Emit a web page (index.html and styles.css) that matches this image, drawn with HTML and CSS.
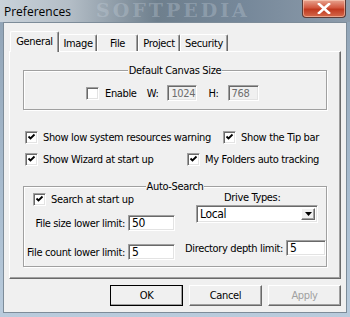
FILE: index.html
```html
<!DOCTYPE html>
<html lang="en">
<head>
    <meta charset="UTF-8">
    <title>Preferences</title>
    <link rel="stylesheet" href="styles.css">
</head>
<body>
    <div class="window">
        <div class="titlebar">
            <span class="title">Preferences</span>
            <span class="watermark">SOFTPEDIA</span>
            <span class="close">
                <svg width="14" height="11" viewBox="0 0 14 11">
                    <path d="M2 1 L12 10 M12 1 L2 10" stroke="#fff" stroke-width="2.6" stroke-linecap="square"/>
                </svg>
            </span>
        </div>

        <div class="client">
            <div class="tabs">
                <div class="tab selected" style="width: 49px">General</div>
                <div class="tab" style="width: 38px">Image</div>
                <div class="tab" style="width: 41px">File</div>
                <div class="tab" style="width: 42px">Project</div>
                <div class="tab" style="width: 48px">Security</div>
            </div>

            <div class="panel">
                <div class="group canvas">
                    <div class="group-title">Default Canvas Size</div>
                    <div class="canvas-row">
                        <span class="check"></span>
                        <span class="label enable">Enable</span>
                        <span class="label">W:</span>
                        <span class="field disabled w-field">1024</span>
                        <span class="label">H:</span>
                        <span class="field disabled h-field">768</span>
                    </div>
                </div>

                <div class="options">
                    <div class="opt-row">
                        <span class="item"><span class="check on"></span>Show low system resources warning</span>
                        <span class="item"><span class="check on"></span>Show the Tip bar</span>
                    </div>
                    <div class="opt-row">
                        <span class="item"><span class="check on"></span>Show Wizard at start up</span>
                        <span class="item"><span class="check on"></span>My Folders auto tracking</span>
                    </div>
                </div>

                <div class="group search">
                    <div class="group-title">Auto-Search</div>
                    <div class="search-cols">
                        <div class="col-left">
                            <span class="item"><span class="check on"></span>Search at start up</span>
                            <div class="field-row size-row">
                                <span class="field-label">File size lower limit:</span>
                                <span class="field num">50</span>
                            </div>
                            <div class="field-row count-row">
                                <span class="field-label">File count lower limit:</span>
                                <span class="field num">5</span>
                            </div>
                        </div>
                        <div class="col-right">
                            <div class="drive-label">Drive Types:</div>
                            <div class="select">
                                <span class="select-value">Local</span>
                                <span class="select-btn">
                                    <svg width="7" height="4" viewBox="0 0 7 4"><path d="M0 0 H7 L3.5 4 Z" fill="#000"/></svg>
                                </span>
                            </div>
                            <div class="field-row depth-row">
                                <span class="depth-label">Directory depth limit:</span>
                                <span class="field num">5</span>
                            </div>
                        </div>
                    </div>
                </div>
            </div>

            <div class="buttons">
                <button class="btn default">OK</button>
                <button class="btn">Cancel</button>
                <button class="btn" disabled>Apply</button>
            </div>
        </div>
    </div>
</body>
</html>
```

FILE: styles.css
```css
body {
    margin: 0;
    font-family: 'DejaVu Sans Condensed', 'DejaVu Sans', sans-serif;
    font-stretch: condensed;
    font-size: 11px;
    letter-spacing: -0.35px;
    color: #000;
    white-space: nowrap;
}

.window {
    width: 350px;
    height: 317px;
    box-sizing: border-box;
    padding: 0 3px 4px 3px;
    background: linear-gradient(to bottom, #8fa2b4, #a8bccf 60%, #b9cbdc);
    overflow: hidden;
}

/* title bar */
.titlebar {
    height: 22px;
    margin: 0 -3px;
    display: flex;
    align-items: flex-start;
    background: linear-gradient(to right, #c9d2da 0%, #b3bdc6 20%, #6e7f8d 45%, #76889a 70%, #8d9cab 100%);
    position: relative;
    overflow: hidden;
}

.title {
    font-family: 'Open Sans', 'Liberation Sans', sans-serif;
    font-stretch: normal;
    letter-spacing: 0;
    font-size: 12px;
    padding: 3px 0 0 4px;
    color: #000;
}

.watermark {
    position: absolute;
    left: 96px;
    top: 0;
    font-family: 'DejaVu Serif', serif;
    font-stretch: normal;
    font-weight: bold;
    font-size: 19px;
    line-height: 21px;
    letter-spacing: 3px;
    color: rgba(205, 215, 225, 0.3);
}

.close {
    margin-left: auto;
    margin-right: 4px;
    width: 44px;
    height: 18px;
    box-sizing: border-box;
    border: 1px solid #5a3a36;
    border-top: none;
    border-radius: 0 0 4px 4px;
    background: linear-gradient(to bottom, #e8a490 0%, #d2583f 45%, #c0391f 55%, #d56a4c 100%);
    box-shadow: inset 0 0 0 1px rgba(255, 220, 200, 0.5);
    display: flex;
    align-items: center;
    justify-content: center;
}

/* client area */
.client {
    height: 291px;
    box-sizing: border-box;
    background: #f0f0f0;
    border: 1px solid #7d8c99;
    padding: 8px 5px 0 5px;
}

.tabs {
    display: flex;
    align-items: flex-end;
    height: 20px;
    padding-left: 1px;
}

.tab {
    height: 17px;
    box-sizing: border-box;
    padding-top: 2px;
    text-align: center;
    border-top: 1px solid #fff;
    border-left: 1px solid #fff;
    border-right: 1px solid #696969;
    box-shadow: inset -1px 0 0 #a0a0a0;
    border-radius: 2px 2px 0 0;
}

.tab.selected {
    height: 21px;
    margin-bottom: -1px;
    padding-top: 3px;
    background: #f0f0f0;
    position: relative;
    z-index: 1;
}

.panel {
    width: 332px;
    height: 228px;
    box-sizing: border-box;
    border-top: 1px solid #fff;
    border-left: 1px solid #fff;
    border-right: 1px solid #696969;
    border-bottom: 1px solid #696969;
    box-shadow: inset -1px -1px 0 #a0a0a0;
    padding: 0 13px;
}

/* group boxes */
.group {
    border: 1px solid #a0a0a0;
    box-shadow: 1px 1px 0 #fff, inset 1px 1px 0 #fff;
}

.group-title {
    width: fit-content;
    margin: -7px auto 0;
    padding: 0 1px;
    line-height: 13px;
    background: #f0f0f0;
}

.canvas {
    margin-top: 18px;
    height: 40px;
    box-sizing: border-box;
}

.canvas-row {
    display: flex;
    align-items: center;
    height: 16px;
    margin-top: 8px;
    padding-left: 62px;
}

.label {
    margin-left: 6px;
    margin-right: 9px;
}

.label.enable {
    margin-right: 4px;
}

/* checkboxes */
.check {
    display: inline-block;
    width: 13px;
    height: 13px;
    box-sizing: border-box;
    background: #fff center / 9px 9px no-repeat;
    border: 1px solid;
    border-color: #a0a0a0 #fff #fff #a0a0a0;
    box-shadow: inset 1px 1px 0 #696969, inset -1px -1px 0 #e3e3e3;
    flex-shrink: 0;
}

.check.on {
    background-image: url("data:image/svg+xml,%3Csvg xmlns='http://www.w3.org/2000/svg' width='9' height='9' viewBox='0 0 9 9'%3E%3Cpath d='M1.5 3.5 L3.5 5.5 L7.5 1.5' stroke='%23000' stroke-width='1.8' fill='none'/%3E%3C/svg%3E");
}

.item {
    display: inline-flex;
    align-items: center;
    gap: 5px;
    height: 13px;
}

/* text fields */
.field {
    height: 16px;
    box-sizing: border-box;
    border: 1px solid;
    border-color: #a0a0a0 #fff #fff #a0a0a0;
    box-shadow: inset 1px 1px 0 #696969, inset -1px -1px 0 #e3e3e3;
    background: #fff;
    padding: 1px 0 0 3px;
    line-height: 13px;
    font-size: 12px;
}

.field.disabled {
    background: #f0f0f0;
    color: #6d6d6d;
    font-size: 11px;
}

.w-field {
    width: 30px;
    margin-right: 5px;
}

.h-field {
    width: 31px;
}

/* check options */
.options {
    margin-top: 21px;
    padding: 0 8px 0 2px;
    display: flex;
    flex-direction: column;
    gap: 9px;
}

.opt-row {
    display: flex;
    justify-content: space-between;
}

/* auto-search */
.search {
    margin-top: 20px;
    height: 81px;
    box-sizing: border-box;
}

.search-cols {
    display: flex;
}

.col-left {
    width: 162px;
    padding-left: 9px;
    box-sizing: border-box;
}

.field-row {
    display: flex;
    align-items: center;
}

.field-label {
    width: 101px;
    margin-left: -9px;
    text-align: right;
    margin-right: 3px;
    flex-shrink: 0;
}

.size-row {
    margin-top: 6px;
}

.count-row {
    margin-top: 13px;
}

.num {
    width: 47px;
}

.col-right {
    width: 141px;
}

.drive-label {
    margin-top: -2px;
    line-height: 13px;
    padding-left: 39px;
}

.select {
    margin: 1px 0 0 11px;
    width: 122px;
    height: 18px;
    box-sizing: border-box;
    display: flex;
    align-items: center;
    border: 1px solid;
    border-color: #a0a0a0 #fff #fff #a0a0a0;
    box-shadow: inset 1px 1px 0 #696969, inset -1px -1px 0 #e3e3e3;
    background: #fff;
    padding: 2px;
}

.select-value {
    flex: 1;
    font-size: 12px;
    padding-left: 1px;
}

.select-btn {
    width: 14px;
    height: 12px;
    box-sizing: border-box;
    background: #f0f0f0;
    border: 1px solid;
    border-color: #fff #696969 #696969 #fff;
    box-shadow: inset -1px -1px 0 #a0a0a0;
    display: flex;
    align-items: center;
    justify-content: center;
}

.depth-row {
    margin-top: 17px;
}

.depth-label {
    margin-right: 3px;
}

/* dialog buttons */
.buttons {
    display: flex;
    justify-content: flex-end;
    gap: 6px;
    margin-top: 6px;
}

.btn {
    width: 73px;
    height: 21px;
    font-family: inherit;
    font-stretch: condensed;
    letter-spacing: inherit;
    font-size: 11px;
    color: #000;
    background: #f0f0f0;
    border: 1px solid;
    border-color: #fff #696969 #696969 #fff;
    box-shadow: inset -1px -1px 0 #a0a0a0;
    padding: 0;
}

.btn.default {
    outline: 1px solid #000;
    outline-offset: -1px;
    border-color: #fff #000 #000 #fff;
}

.btn:disabled {
    color: #a0a0a0;
}
```
